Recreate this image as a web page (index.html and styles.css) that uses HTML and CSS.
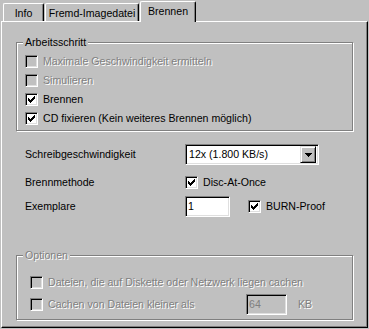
FILE: index.html
```html
<!DOCTYPE html>
<html lang="de">
<head>
    <meta charset="UTF-8">
    <title>Brennen</title>
    <link rel="stylesheet" href="styles.css">
</head>
<body>
    <div class="dialog">
        <div class="tabs">
            <div class="tab tab-info">Info</div>
            <div class="tab tab-image">Fremd-Imagedatei</div>
            <div class="tab tab-burn active">Brennen</div>
        </div>

        <div class="panel">
            <fieldset class="group group-steps">
                <legend>Arbeitsschritt</legend>
                <div class="check-row disabled">
                    <span class="check"></span>
                    <span class="text">Maximale Geschwindigkeit ermitteln</span>
                </div>
                <div class="check-row disabled">
                    <span class="check"></span>
                    <span class="text">Simulieren</span>
                </div>
                <div class="check-row">
                    <span class="check"><svg class="tick" width="7" height="7" viewBox="0 0 7 7"><path d="M0 2h1v1h1v1h1v-1h1v-1h1v-1h1v-1h1v3h-1v1h-1v1h-1v1h-1v1h-1v-1h-1v-1h-1z"/></svg></span>
                    <span class="text">Brennen</span>
                </div>
                <div class="check-row">
                    <span class="check"><svg class="tick" width="7" height="7" viewBox="0 0 7 7"><path d="M0 2h1v1h1v1h1v-1h1v-1h1v-1h1v-1h1v3h-1v1h-1v1h-1v1h-1v1h-1v-1h-1v-1h-1z"/></svg></span>
                    <span class="text">CD fixieren (Kein weiteres Brennen möglich)</span>
                </div>
            </fieldset>

            <div class="field-row row-speed">
                <span class="field-label">Schreibgeschwindigkeit</span>
                <div class="combo">
                    <span class="combo-text">12x (1.800 KB/s)</span>
                    <span class="combo-btn"><svg width="7" height="4" viewBox="0 0 7 4"><path d="M0 0h7v1h-1v1h-1v1h-1v1h-1v-1h-1v-1h-1v-1h-1z"/></svg></span>
                </div>
            </div>

            <div class="field-row row-method">
                <span class="field-label">Brennmethode</span>
                <span class="check"><svg class="tick" width="7" height="7" viewBox="0 0 7 7"><path d="M0 2h1v1h1v1h1v-1h1v-1h1v-1h1v-1h1v3h-1v1h-1v1h-1v1h-1v1h-1v-1h-1v-1h-1z"/></svg></span>
                <span class="text">Disc-At-Once</span>
            </div>

            <div class="field-row row-copies">
                <span class="field-label">Exemplare</span>
                <span class="edit edit-copies">1</span>
                <span class="check check-proof"><svg class="tick" width="7" height="7" viewBox="0 0 7 7"><path d="M0 2h1v1h1v1h1v-1h1v-1h1v-1h1v-1h1v3h-1v1h-1v1h-1v1h-1v1h-1v-1h-1v-1h-1z"/></svg></span>
                <span class="text">BURN-Proof</span>
            </div>

            <fieldset class="group group-options disabled">
                <legend>Optionen</legend>
                <div class="check-row">
                    <span class="check"></span>
                    <span class="text">Dateien, die auf Diskette oder Netzwerk liegen cachen</span>
                </div>
                <div class="check-row row-cache">
                    <span class="check"></span>
                    <span class="text text-cache">Cachen von Dateien kleiner als</span>
                    <span class="edit edit-size">64</span>
                    <span class="unit">KB</span>
                </div>
            </fieldset>
        </div>
    </div>
</body>
</html>
```

FILE: styles.css
```css
body {
    margin: 0;
    background: #c0c0c0;
    font-family: "Liberation Sans", Arial, sans-serif;
    font-size: 10.6px;
    line-height: 13px;
    color: #000;
}
.dialog {
    width: 367px;
    margin-left: 1px;
}

/* tabs */
.tabs {
    display: flex;
    align-items: flex-end;
    height: 21px;
    padding-left: 2px;
}
.tab {
    box-sizing: border-box;
    height: 18px;
    padding-top: 3px;
    margin-right: 1px;
    text-align: center;
    border-top: 1px solid #fff;
    border-left: 1px solid #fff;
    border-right: 1px solid #000;
    border-radius: 2px 2px 0 0;
    box-shadow: inset -1px 0 0 #808080;
}
.tab-info { width: 41px; }
.tab-image { width: 94px; }
.tab-burn { width: 56px; }
.tab.active {
    position: relative;
    z-index: 1;
    height: 21px;
    margin-bottom: -1px;
    background: #c0c0c0;
}

/* page */
.panel {
    box-sizing: border-box;
    height: 307px;
    padding-top: 14px;
    border-top: 1px solid #fff;
    border-left: 1px solid #fff;
    border-right: 1px solid #000;
    border-bottom: 1px solid #000;
    box-shadow: inset -1px -1px 0 #808080;
}

/* group boxes */
.group {
    margin: 0 14px;
    min-width: 0;
    border: 1px solid #808080;
    box-shadow: inset 1px 1px 0 #fff, 1px 1px 0 #fff;
}
.group legend {
    padding: 0 2px;
    background: #c0c0c0;
}
.group-steps {
    padding: 3px 0 2px 8px;
}
.group-steps legend {
    margin-left: -2px;
}
.group-options {
    margin-top: 32px;
    padding: 11px 0 4px 13px;
}
.group-options legend {
    margin-left: -7px;
}

/* checkboxes */
.check-row {
    display: flex;
    align-items: center;
    height: 19px;
}
.check {
    box-sizing: border-box;
    flex: none;
    display: flex;
    align-items: center;
    justify-content: center;
    width: 13px;
    height: 13px;
    background: #fff;
    border: 1px solid;
    border-color: #808080 #fff #fff #808080;
    box-shadow: inset 1px 1px 0 #000, inset -1px -1px 0 #dfdfdf;
}
.tick {
    display: block;
    fill: #000;
    shape-rendering: crispEdges;
}
.text {
    margin-left: 5px;
    white-space: nowrap;
}
.disabled .check {
    background: #c0c0c0;
}
.disabled .text,
.disabled legend,
.disabled .unit,
.disabled .edit {
    color: #808080;
    text-shadow: 1px 1px 0 #fff;
}
.disabled .edit {
    text-shadow: none;
}

/* labelled fields */
.field-row {
    display: flex;
    align-items: center;
    height: 21px;
    margin-left: 23px;
}
.field-label {
    flex: none;
    width: 160px;
}
.row-speed { margin-top: 13px; }
.row-method { margin-top: 7px; }
.row-copies { margin-top: 3px; }

.combo,
.edit {
    box-sizing: border-box;
    display: flex;
    align-items: center;
    height: 21px;
    background: #fff;
    border: 1px solid;
    border-color: #808080 #fff #fff #808080;
    box-shadow: inset 1px 1px 0 #000, inset -1px -1px 0 #dfdfdf;
}
.combo {
    width: 134px;
    padding: 2px;
}
.combo-text {
    padding-left: 1px;
}
.combo-btn {
    box-sizing: border-box;
    display: flex;
    align-items: center;
    justify-content: center;
    width: 16px;
    height: 17px;
    margin-left: auto;
    background: #c0c0c0;
    border: 1px solid;
    border-color: #dfdfdf #000 #000 #dfdfdf;
    box-shadow: inset 1px 1px 0 #fff, inset -1px -1px 0 #808080;
}
.combo-btn svg {
    display: block;
    fill: #000;
    shape-rendering: crispEdges;
}
.edit {
    padding-left: 2px;
}
.edit-copies {
    width: 45px;
}
.check-proof {
    margin-left: 18px;
}

/* options group */
.row-cache {
    height: 21px;
    margin-top: 2px;
}
.text-cache {
    flex: none;
    width: 198px;
}
.edit-size {
    width: 41px;
    background: #c0c0c0;
}
.unit {
    margin-left: 11px;
}
```
